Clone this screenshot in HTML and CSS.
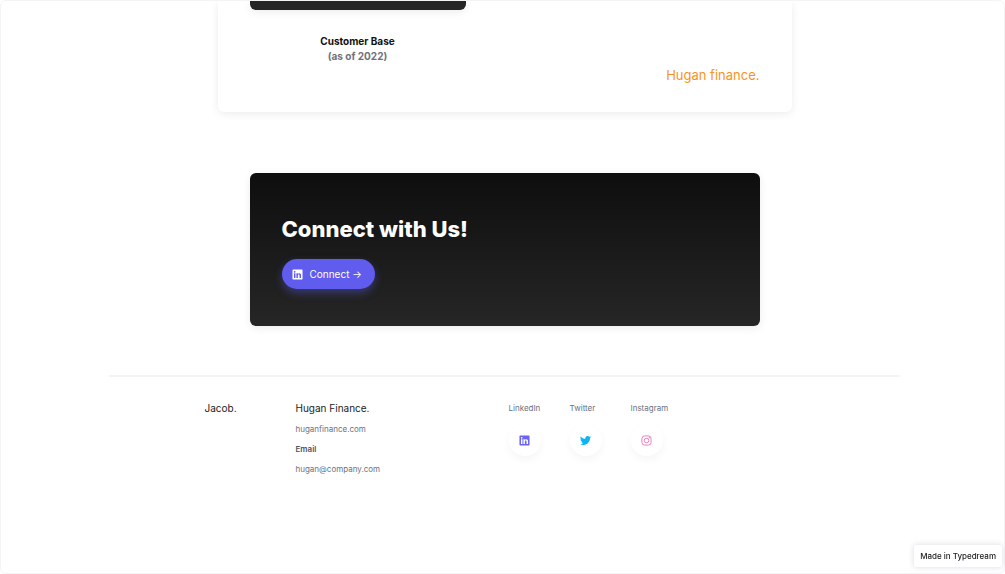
FILE: index.html
```
<!DOCTYPE html>
<html lang="en">
<head>
    <meta charset="UTF-8">
    <meta name="viewport" content="width=device-width, initial-scale=1.0">
    <title>Hugan Finance</title>
    <link rel="stylesheet" href="styles.css">
</head>
<body>
    <!-- Shared icon -->
    <svg class="sprite" aria-hidden="true">
        <symbol id="linkedin" viewBox="0 0 24 24">
            <path fill-rule="evenodd" d="M2.5 1h19A1.5 1.5 0 0 1 23 2.5v19a1.5 1.5 0 0 1-1.5 1.5h-19A1.5 1.5 0 0 1 1 21.5v-19A1.5 1.5 0 0 1 2.5 1zM4.3 9.3v10.4h3.2V9.3zM5.9 4.2a1.9 1.9 0 1 0 0 3.8 1.9 1.9 0 0 0 0-3.8zM9.6 9.3v10.4h3.2v-5.2c0-1.4.4-2.6 1.9-2.6s1.7 1.3 1.7 2.7v5.1h3.3V14c0-2.8-.7-4.900-3.900-4.900-1.500 0-2.600.8-3 1.600h-.1V9.300z"/>
        </symbol>
    </svg>

    <main>
        <section class="report">
            <figure class="chart">
                <div class="chart-box"></div>
                <figcaption>Customer Base<span>(as of 2022)</span></figcaption>
            </figure>
            <p class="brand">Hugan finance.</p>
        </section>

        <section class="connect">
            <h2>Connect with Us!</h2>
            <button type="button" class="btn">
                <svg class="icon" aria-hidden="true"><use href="#linkedin"/></svg>
                Connect →
            </button>
        </section>
    </main>

    <footer>
        <div class="footer-inner">
            <p class="footer-title owner">Jacob.</p>
            <div class="contact">
                <p class="footer-title">Hugan Finance.</p>
                <a href="#">huganfinance.com</a>
                <strong>Email</strong>
                <a href="#">hugan@company.com</a>
            </div>
            <div class="socials">
                <a class="social" href="#">
                    <span>LinkedIn</span>
                    <span class="circle linkedin"><svg class="icon" aria-hidden="true"><use href="#linkedin"/></svg></span>
                </a>
                <a class="social" href="#">
                    <span>Twitter</span>
                    <span class="circle twitter">
                        <svg class="icon" viewBox="0 0 24 24" aria-hidden="true"><path d="M23.95 4.57a10 10 0 0 1-2.82.77 4.96 4.96 0 0 0 2.16-2.72c-.95.55-2 .95-3.13 1.18a4.92 4.92 0 0 0-8.38 4.48C7.69 8.09 4.07 6.13 1.64 3.16a4.92 4.92 0 0 0 1.52 6.57 4.9 4.9 0 0 1-2.23-.61v.06a4.92 4.92 0 0 0 3.95 4.83 5 5 0 0 1-2.21.08 4.94 4.94 0 0 0 4.6 3.42A9.87 9.87 0 0 1 0 19.54a13.99 13.99 0 0 0 7.55 2.21c9.05 0 14-7.5 14-13.98 0-.21 0-.42-.02-.63a9.94 9.94 0 0 0 2.42-2.57z"/></svg>
                    </span>
                </a>
                <a class="social" href="#">
                    <span>Instagram</span>
                    <span class="circle instagram">
                        <svg class="icon" viewBox="0 0 24 24" aria-hidden="true">
                            <rect x="2" y="2" width="20" height="20" rx="6"/>
                            <circle cx="12" cy="12" r="5"/>
                            <circle class="dot" cx="18" cy="6" r="1.5"/>
                        </svg>
                    </span>
                </a>
            </div>
        </div>
    </footer>

    <a class="badge" href="#">Made in Typedream</a>
</body>
</html>
```
FILE: styles.css
```
/* Global Styles */
* {
    box-sizing: border-box;
}

body {
    margin: 0;
    padding-left: 4px;
    min-height: 100vh;
    border: 1px solid #f4f4f4;
    border-radius: 6px;
    font-family: Inter, "Liberation Sans", sans-serif;
    font-size: 8px;
    line-height: 12px;
    color: #6b7280;
    background: #fff;
}

h2, p, figure {
    margin: 0;
}

a {
    color: inherit;
    text-decoration: none;
}

.sprite {
    position: absolute;
    width: 0;
    height: 0;
}

.icon {
    width: 11px;
    height: 11px;
    fill: currentColor;
}

main {
    max-width: 574px;
    margin: 0 auto;
}

/* Report card */
.report {
    display: flex;
    justify-content: space-between;
    align-items: flex-end;
    padding: 0 32px 28px;
    border-radius: 0 0 6px 6px;
    box-shadow: 0 2px 8px rgba(0, 0, 0, 0.08);
}

.chart {
    width: 216px;
    padding-bottom: 20px;
    text-align: center;
    font-size: 10px;
    line-height: 15px;
    font-weight: 700;
    color: #111;
}

.chart-box {
    height: 9px;
    margin-bottom: 24px;
    background: #262626;
    border-radius: 0 0 6px 6px;
    box-shadow: 0 2px 8px rgba(0, 0, 0, 0.08);
}

.chart span {
    display: block;
    color: #71717a;
}

.brand {
    font-size: 13px;
    line-height: 18px;
    color: #f7941d;
}

/* Connect card */
.connect {
    margin: 61px 32px 49px;
    padding: 41px 32px 37px;
    border-radius: 6px;
    background: linear-gradient(#0e0e0e, #262626);
    box-shadow: 0 2px 8px rgba(0, 0, 0, 0.08);
}

.connect h2 {
    margin-bottom: 15px;
    font-size: 22px;
    line-height: 30px;
    font-weight: 800;
    color: #fff;
}

.btn {
    display: flex;
    align-items: center;
    gap: 7px;
    height: 30px;
    padding: 0 13px 0 10px;
    border: none;
    border-radius: 15px;
    font-family: inherit;
    font-size: 10px;
    color: #fff;
    background: #5f5cee;
    box-shadow: 0 4px 8px rgba(95, 92, 238, 0.4);
    cursor: pointer;
}

/* Footer */
footer {
    max-width: 791px;
    margin: 0 auto;
    border-top: 2px solid #f4f4f5;
}

.footer-inner {
    display: flex;
    max-width: 600px;
    margin: 0 auto;
    padding: 24px 0;
}

.footer-title {
    font-size: 10px;
    line-height: 14px;
    color: #222;
}

.owner {
    width: 91px;
}

.contact {
    display: flex;
    flex-direction: column;
    gap: 8px;
    width: 213px;
}

.contact strong {
    font-weight: 600;
    color: #4b5563;
}

.socials {
    display: flex;
    gap: 29px;
    padding-top: 1px;
}

.social {
    display: flex;
    flex-direction: column;
    gap: 10px;
}

.circle {
    display: flex;
    justify-content: center;
    align-items: center;
    width: 32px;
    height: 32px;
    border-radius: 50%;
    box-shadow: 0 4px 8px rgba(0, 0, 0, 0.04);
}

.linkedin {
    color: #6965f0;
}

.twitter {
    color: #0ab4f5;
}

.instagram {
    color: #f472b6;
}

.instagram .icon {
    fill: none;
    stroke: currentColor;
    stroke-width: 2;
}

.instagram .dot {
    fill: currentColor;
    stroke: none;
}

/* Floating badge */
.badge {
    position: fixed;
    right: 3px;
    bottom: 7px;
    padding: 5px 6px;
    border-radius: 3px;
    font-weight: 500;
    color: #222;
    background: #fff;
    box-shadow: 0 0 6px rgba(80, 70, 120, 0.2);
}
```
